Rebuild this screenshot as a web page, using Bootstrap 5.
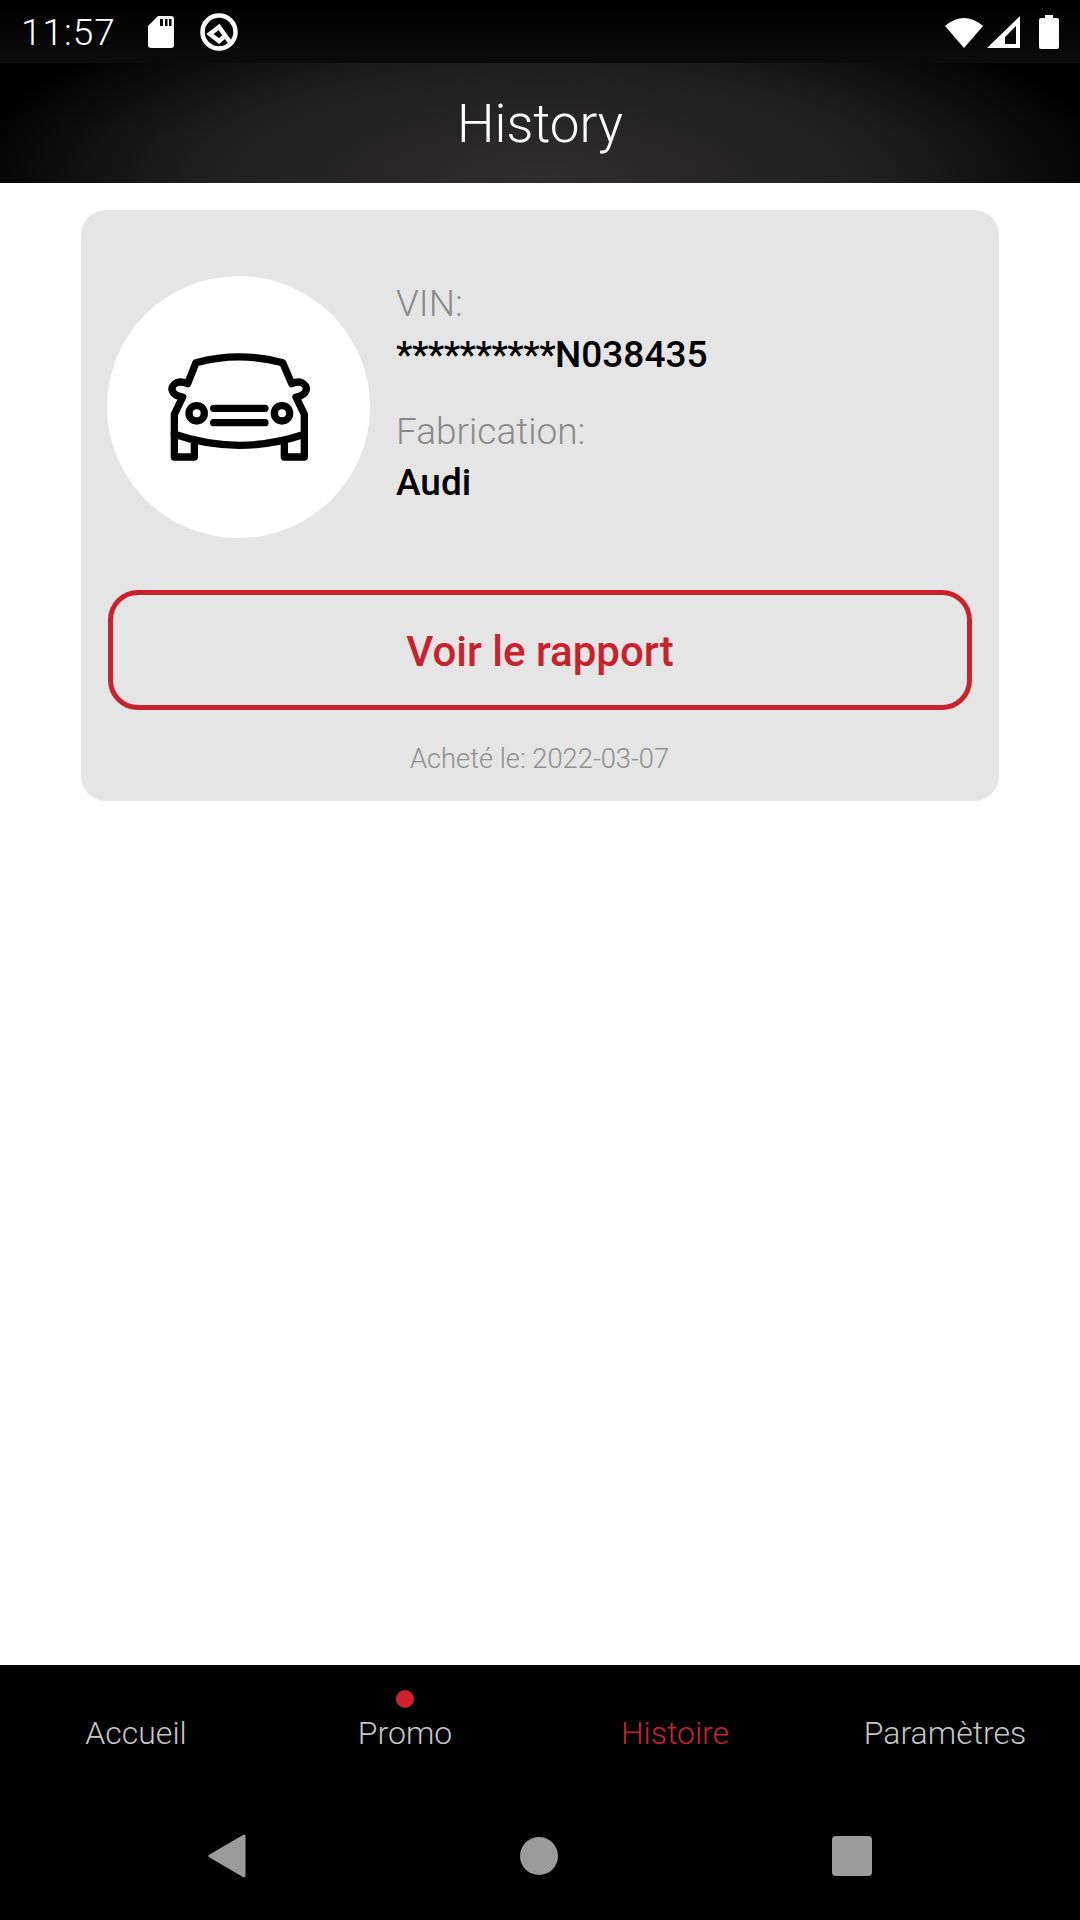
<!DOCTYPE html>
<html lang="fr">
<head>
    <meta charset="UTF-8">
    <meta name="viewport" content="width=device-width, initial-scale=1.0">
    <title>History</title>
    <link href="https://cdn.jsdelivr.net/npm/bootstrap@5.3.0/dist/css/bootstrap.min.css" rel="stylesheet">
    <style>
        body {
            font-family: Roboto, "Liberation Sans", sans-serif;
            background-color: #fff;
        }

        .screen {
            height: 1920px;
        }

        .status-bar {
            height: 63px;
            background: linear-gradient(#000, #0b0b0b);
            padding: 0 21px;
        }

        .status-time {
            font-size: 37px;
            font-weight: 300;
            letter-spacing: 1px;
            width: 127px;
            padding-top: 3px;
        }

        .q-icon {
            margin-left: 26px;
        }

        .battery-icon {
            margin-left: 19px;
        }

        .app-title {
            height: 120px;
            padding-top: 3px;
            font-size: 53px;
            font-weight: 300;
            background: radial-gradient(ellipse 590px 200px at 50% 100%, #302e2e 0%, #1f1e1e 60%, #000 100%);
        }

        .history-card {
            width: 918px;
            height: 591px;
            margin: 27px auto 0;
            padding: 66px 27px 0 26px;
            background: #e5e5e5;
            border-radius: 25px;
        }

        .car-circle {
            width: 263px;
            height: 262px;
            flex-shrink: 0;
        }

        .car-icon {
            margin: -3px 0 0 4px;
        }

        .car-info {
            padding: 0 0 29px 26px;
            font-size: 37px;
            line-height: 51px;
        }

        .info-label {
            color: #8a8a8a;
            font-weight: 300;
        }

        .info-value {
            color: #000;
            font-weight: 500;
            font-size: 37px;
            margin-bottom: 26px;
        }

        .vin-stars {
            letter-spacing: -0.500px;
        }

        .btn.report-btn {
            height: 120px;
            width: 864px;
            margin: 52px 0 0 1px;
            padding-top: 8px;
            border: 5px solid #c8232d;
            border-radius: 30px;
            color: #c8232d;
            font-size: 42px;
            font-weight: 500;
        }

        .bought-date {
            margin-top: 29px;
            color: #8f8f8f;
            font-size: 27.300px;
            font-weight: 300;
        }

        .bottom-area {
            height: 255px;
            background: #000;
        }

        .tab-row {
            height: 127px;
        }

        .tab-item {
            width: 270px;
            padding-top: 43px;
            color: #c6c6c6;
            font-size: 32px;
            font-weight: 300;
            line-height: 50px;
        }

        .tab-first {
            padding-left: 2px;
        }

        .tab-active {
            color: #c8232d;
        }

        .tab-dot {
            width: 18px;
            height: 18px;
            top: 25px;
            left: 126px;
            background: #d3222f;
        }

        .sys-nav {
            height: 128px;
            gap: 274px;
        }
    </style>
</head>
<body>
    <div class="screen d-flex flex-column">
        <div class="text-white">
            <div class="status-bar d-flex align-items-center">
                <span class="status-time">11:57</span>
                <svg width="26" height="32" viewBox="0 0 26 32"><path fill="#fff" fill-rule="evenodd" d="M10 0h13a3 3 0 0 1 3 3v26a3 3 0 0 1-3 3H3a3 3 0 0 1-3-3V10zM12 3v7h3V3zM17 3v7h2.500V3zM21 3v7h2.500V3z"/></svg>
                <svg width="38" height="38" viewBox="0 0 38 38" class="q-icon me-auto" fill="none" stroke="#fff" stroke-width="4.500"><circle cx="19" cy="19" r="16.500"/><path d="M32 32L19 14l-9 7 9 7 6-5"/></svg>
                <svg width="38" height="32" viewBox="0 0 38 32"><path fill="#fff" d="M0 10Q19-6 38 10L19 32z"/></svg>
                <svg width="33" height="32" viewBox="0 0 33 32" class="ms-1"><path fill="#fff" fill-rule="evenodd" d="M33 0v32H0zM29 10l-11 11v7h11z"/></svg>
                <svg width="20" height="34" viewBox="0 0 20 34" class="battery-icon"><path fill="#fff" d="M6 0h8v3h4a2 2 0 0 1 2 2v27a2 2 0 0 1-2 2H2a2 2 0 0 1-2-2V5a2 2 0 0 1 2-2h4z"/></svg>
            </div>
            <div class="app-title d-flex align-items-center justify-content-center">History</div>
        </div>

        <main class="flex-grow-1">
            <div class="history-card">
                <div class="d-flex align-items-center">
                    <div class="car-circle bg-white rounded-circle d-flex align-items-center justify-content-center">
                        <svg class="car-icon" width="200" height="150" viewBox="0 0 600 450" fill="none" stroke="#000" stroke-width="22" stroke-linecap="round" stroke-linejoin="round">
                            <path d="M165 95Q295 60 425 95L452 158Q470 150 482 155C505 165 500 192 465 198L490 250V310Q295 376 100 310V250L125 198C88 192 84 165 108 155Q120 150 140 158z"/>
                            <path d="M100 310V378H160V335M490 310V378H430V335"/>
                            <circle cx="167" cy="247" r="23"/>
                            <circle cx="423" cy="247" r="23"/>
                            <path d="M218 232H372M218 275H372"/>
                        </svg>
                    </div>
                    <div class="car-info">
                        <div class="info-label">VIN:</div>
                        <div class="info-value"><span class="vin-stars">**********</span>N038435</div>
                        <div class="info-label">Fabrication:</div>
                        <div class="info-value mb-0">Audi</div>
                    </div>
                </div>
                <a href="#" class="btn report-btn d-flex align-items-center justify-content-center">Voir le rapport</a>
                <div class="bought-date text-center">Acheté le: 2022-03-07</div>
            </div>
        </main>

        <div class="bottom-area">
            <div class="tab-row d-flex">
                <div class="tab-item tab-first text-center">Accueil</div>
                <div class="tab-item text-center position-relative">Promo<span class="tab-dot position-absolute rounded-circle"></span></div>
                <div class="tab-item text-center tab-active">Histoire</div>
                <div class="tab-item text-center">Paramètres</div>
            </div>
            <div class="sys-nav d-flex align-items-center justify-content-center">
                <svg width="38" height="46" viewBox="0 0 40 46"><path fill="#9b9b9b" stroke="#9b9b9b" stroke-width="3" stroke-linejoin="round" d="M38 2V44L2 23z"/></svg>
                <svg width="38" height="38" viewBox="0 0 38 38"><circle cx="19" cy="19" r="19" fill="#9b9b9b"/></svg>
                <svg width="40" height="40" viewBox="0 0 40 40"><rect width="40" height="40" rx="4" fill="#9b9b9b"/></svg>
            </div>
        </div>
    </div>
    <script src="https://cdn.jsdelivr.net/npm/bootstrap@5.3.0/dist/js/bootstrap.bundle.min.js"></script>
</body>
</html>
